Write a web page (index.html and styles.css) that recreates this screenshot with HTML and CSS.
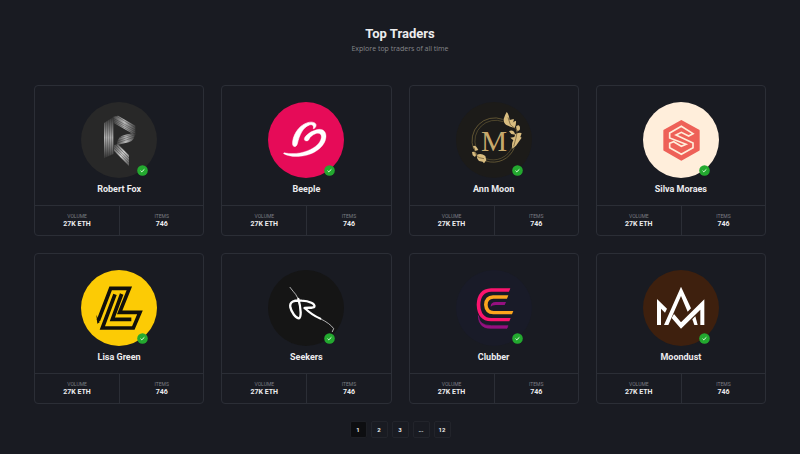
FILE: index.html
```
<!DOCTYPE html>
<html lang="en">
<head>
<meta charset="utf-8">
<meta name="viewport" content="width=device-width, initial-scale=1">
<title>Top Traders</title>
<link rel="stylesheet" href="styles.css">
</head>
<body>
<main class="page">
  <header class="heading">
    <h1>Top Traders</h1>
    <p>Explore top traders of all time</p>
  </header>

  <section class="grid" id="grid" aria-label="Traders">
    <article class="card">
      <div class="profile">
        <div class="avatar">
          <svg class="logo" viewBox="15 14 228 228" aria-hidden="true">
            <defs>
              <linearGradient id="r1" x1="0" y1="0" x2="0" y2="1"><stop offset="0" stop-color="#333"/><stop offset=".5" stop-color="#b5b5b5"/><stop offset="1" stop-color="#333"/></linearGradient>
              <linearGradient id="r2" x1="0" y1="0" x2="1" y2="0"><stop offset="0" stop-color="#444"/><stop offset=".5" stop-color="#bbb"/><stop offset="1" stop-color="#444"/></linearGradient>
              <linearGradient id="r3" x1="0" y1="0" x2="1" y2="1"><stop offset="0" stop-color="#444"/><stop offset=".5" stop-color="#ccc"/><stop offset="1" stop-color="#555"/></linearGradient>
            </defs>
            <circle cx="129" cy="128" r="114" fill="#282828"/>
            <path d="M84 77L112 59V170L84 183Z" fill="url(#r1)"/>
            <path d="M112 58L126 55L178 85V114L112 76Z" fill="url(#r2)"/>
            <path d="M123 137Q127 116 145 113L177 106Q177 130 158 135L123 143Z" fill="url(#r2)"/>
            <path d="M114 143L126 141L159 174V206L114 160Z" fill="url(#r3)"/>
            <g stroke="#292929" stroke-opacity=".6" stroke-width="2" fill="none"><path d="M89 72V184M95 68V182M101 64V180M107 60V178M112 63L178 98M112 68L178 104M112 73L178 110M119 55L178 91M125 131L177 112M124 137L176 119M132 121L176 108M118 141L159 182M115 146L159 190M115 153L159 198"/></g>
          </svg>
          <svg class="badge" viewBox="0 0 11 11" role="img" aria-label="Verified"><circle cx="5.500" cy="5.500" r="5.300" fill="#23a92f"/><path d="M3.600 5.700L4.800 6.800L7.400 4.300" fill="none" stroke="#e4ffe4" stroke-width="1"/></svg>
        </div>
        <h2>Robert Fox</h2>
      </div>
      <dl class="stats"><div><dt>VOLUME</dt><dd>27K ETH</dd></div><div><dt>ITEMS</dt><dd>746</dd></div></dl>
    </article>

    <article class="card">
      <div class="profile">
        <div class="avatar">
          <svg class="logo" viewBox="15 14 228 228" aria-hidden="true">
            <circle cx="129" cy="128" r="114" fill="#e60b58"/>
            <path d="M89 141C87 119 105 84 134 76C147 72 159 76 159 83C159 89 155 94 151 94C153 84 148 80 139 83C119 90 109 114 103 139C100 150 90 150 89 141Z" fill="#fff" stroke="#fff" stroke-width="2"/>
            <path d="M126 119C135 107 151 98 168 96C182 95 190 105 189 119C187 149 151 174 112 177C91 179 72 175 62 169C61 166 64 166 68 167C90 171 113 168 134 160C158 151 174 135 175 119C175 109 168 106 158 109C148 113 141 119 139 125C137 131 129 133 125 129C123 126 124 122 126 119Z" fill="#fff" stroke="#fff" stroke-width="1"/>
          </svg>
          <svg class="badge" viewBox="0 0 11 11" role="img" aria-label="Verified"><circle cx="5.500" cy="5.500" r="5.300" fill="#23a92f"/><path d="M3.600 5.700L4.800 6.800L7.400 4.300" fill="none" stroke="#e4ffe4" stroke-width="1"/></svg>
        </div>
        <h2>Beeple</h2>
      </div>
      <dl class="stats"><div><dt>VOLUME</dt><dd>27K ETH</dd></div><div><dt>ITEMS</dt><dd>746</dd></div></dl>
    </article>

    <article class="card">
      <div class="profile">
        <div class="avatar">
          <svg class="logo" viewBox="15 14 228 228" aria-hidden="true">
            <circle cx="129" cy="128" r="114" fill="#1c1b19"/>
            <g fill="none" stroke="#80703f" stroke-width="2"><path d="M155 66A68 68 0 0 0 68 155M105 191A68 68 0 0 0 190 151"/><path d="M156 73A62 62 0 0 0 75 151M105 184A62 62 0 0 0 184 148" stroke-width="1.500"/></g>
            <text class="monogram" x="129" y="162" text-anchor="middle" font-size="88" fill="#c6a96d">M</text>
            <g fill="#d9bd80">
              <path d="M167 44Q161 54 158 65Q157 78 166 83L178 88L191 92Q196 82 195 70L188 73L185 76Q190 69 188 65L176 68Q174 51 167 44Z"/>
              <path d="M196 92Q193 84 203 84Q209 88 206 98L197 103ZM174 102Q181 97 189 103L193 112L181 110ZM193 110Q208 104 212 108L208 119L212 121L203 134L195 145L184 154Q181 139 187 129L178 121L190 119Z"/>
              <path d="M66 147Q72 142 78 151L82 158L72 161ZM63 164Q73 161 77 170L72 179L65 174ZM77 173Q90 166 103 176L106 189L99 198L95 193L84 191L79 184Z"/>
            </g>
            <path d="M171 60L178 82L199 99L195 122L188 147M70 151L73 170L84 181L99 184" fill="none" stroke="#5e4d2c" stroke-width="2"/>
          </svg>
          <svg class="badge" viewBox="0 0 11 11" role="img" aria-label="Verified"><circle cx="5.500" cy="5.500" r="5.300" fill="#23a92f"/><path d="M3.600 5.700L4.800 6.800L7.400 4.300" fill="none" stroke="#e4ffe4" stroke-width="1"/></svg>
        </div>
        <h2>Ann Moon</h2>
      </div>
      <dl class="stats"><div><dt>VOLUME</dt><dd>27K ETH</dd></div><div><dt>ITEMS</dt><dd>746</dd></div></dl>
    </article>

    <article class="card">
      <div class="profile">
        <div class="avatar">
          <svg class="logo" viewBox="15 14 228 228" aria-hidden="true">
            <circle cx="129" cy="128" r="114" fill="#ffeedb"/>
            <path d="M130 71L182 100V158L130 187L79 158V100Z" fill="#ee6158" stroke="#ee6158" stroke-width="6" stroke-linejoin="round"/>
            <path d="M165 109L152 116L130 105L114 113L165 137V151L130 171L95 151V138L107 133L130 147L144 141L95 122V107L130 87Z" fill="#ee6158" stroke="#ffeedb" stroke-width="5"/>
          </svg>
          <svg class="badge" viewBox="0 0 11 11" role="img" aria-label="Verified"><circle cx="5.500" cy="5.500" r="5.300" fill="#23a92f"/><path d="M3.600 5.700L4.800 6.800L7.400 4.300" fill="none" stroke="#e4ffe4" stroke-width="1"/></svg>
        </div>
        <h2>Silva Moraes</h2>
      </div>
      <dl class="stats"><div><dt>VOLUME</dt><dd>27K ETH</dd></div><div><dt>ITEMS</dt><dd>746</dd></div></dl>
    </article>

    <article class="card">
      <div class="profile">
        <div class="avatar">
          <svg class="logo" viewBox="15 14 228 228" aria-hidden="true">
            <circle cx="129" cy="128" r="114" fill="#fccb05"/>
            <path d="M67 166L104 69H160L131 141H192L172 188H79L117 87" fill="none" stroke="#11100b" stroke-width="11"/>
            <path d="M137 86L109 162H166" fill="none" stroke="#11100b" stroke-width="11"/>
            <path d="M61 148L71 171L64 175Z" fill="#11100b"/>
          </svg>
          <svg class="badge" viewBox="0 0 11 11" role="img" aria-label="Verified"><circle cx="5.500" cy="5.500" r="5.300" fill="#23a92f"/><path d="M3.600 5.700L4.800 6.800L7.400 4.300" fill="none" stroke="#e4ffe4" stroke-width="1"/></svg>
        </div>
        <h2>Lisa Green</h2>
      </div>
      <dl class="stats"><div><dt>VOLUME</dt><dd>27K ETH</dd></div><div><dt>ITEMS</dt><dd>746</dd></div></dl>
    </article>

    <article class="card">
      <div class="profile">
        <div class="avatar">
          <svg class="logo" viewBox="15 14 228 228" aria-hidden="true">
            <circle cx="129" cy="128" r="114" fill="#151515"/>
            <g fill="none" stroke="#fff" stroke-linecap="round" stroke-linejoin="round">
              <path d="M81 66Q91 79 98 87L107 103" stroke-width="2"/>
              <path d="M106 101Q112 120 113 141Q113 158 108 159C99 159 85 141 82 126C79 108 94 104 116 106C139 107 158 116 154 124C150 129 137 126 125 128" stroke-width="7"/>
              <path d="M125 128C137 140 154 152 172 160" stroke-width="6"/>
              <path d="M172 160Q202 175 212 190L208 199" stroke-width="2"/>
            </g>
          </svg>
          <svg class="badge" viewBox="0 0 11 11" role="img" aria-label="Verified"><circle cx="5.500" cy="5.500" r="5.300" fill="#23a92f"/><path d="M3.600 5.700L4.800 6.800L7.400 4.300" fill="none" stroke="#e4ffe4" stroke-width="1"/></svg>
        </div>
        <h2>Seekers</h2>
      </div>
      <dl class="stats"><div><dt>VOLUME</dt><dd>27K ETH</dd></div><div><dt>ITEMS</dt><dd>746</dd></div></dl>
    </article>

    <article class="card">
      <div class="profile">
        <div class="avatar">
          <svg class="logo" viewBox="15 14 228 228" aria-hidden="true">
            <circle cx="129" cy="128" r="114" fill="#191b28"/>
            <path d="M82 151Q84 181 121 181H171L168 189H120Q83 190 82 151Z" fill="#951080" stroke="#951080" stroke-width="2"/>
            <path d="M119 124Q119 110 134 110H165L161 119H134Q123 119 119 124Z" fill="#951080"/>
            <path d="M178 69L174 79H121Q89 80 88 118Q89 157 121 158H179L175 168H120Q79 166 77 118Q79 71 120 69Z" fill="#fb146e"/>
            <path d="M172 90L168 100H127Q110 101 110 118Q110 136 128 137H187L183 147H127Q101 146 99 118Q101 91 126 90Z" fill="#fca51d"/>
          </svg>
          <svg class="badge" viewBox="0 0 11 11" role="img" aria-label="Verified"><circle cx="5.500" cy="5.500" r="5.300" fill="#23a92f"/><path d="M3.600 5.700L4.800 6.800L7.400 4.300" fill="none" stroke="#e4ffe4" stroke-width="1"/></svg>
        </div>
        <h2>Clubber</h2>
      </div>
      <dl class="stats"><div><dt>VOLUME</dt><dd>27K ETH</dd></div><div><dt>ITEMS</dt><dd>746</dd></div></dl>
    </article>

    <article class="card">
      <div class="profile">
        <div class="avatar">
          <svg class="logo" viewBox="15 14 228 228" aria-hidden="true">
            <circle cx="129" cy="128" r="114" fill="#3e200e"/>
            <g fill="#fff">
              <path d="M57 179V101L87 130L81 142L69 130V179Z"/>
              <path d="M78 179L129 64L159 129L149 139L129 92L91 179Z"/>
              <path d="M101 158L108 146L129 171L199 102V179H187V133L129 190Z"/>
              <path d="M163 162L172 153L179 179H169Z"/>
            </g>
          </svg>
          <svg class="badge" viewBox="0 0 11 11" role="img" aria-label="Verified"><circle cx="5.500" cy="5.500" r="5.300" fill="#23a92f"/><path d="M3.600 5.700L4.800 6.800L7.400 4.300" fill="none" stroke="#e4ffe4" stroke-width="1"/></svg>
        </div>
        <h2>Moondust</h2>
      </div>
      <dl class="stats"><div><dt>VOLUME</dt><dd>27K ETH</dd></div><div><dt>ITEMS</dt><dd>746</dd></div></dl>
    </article>
  </section>

  <nav class="pagination" aria-label="Pagination">
    <button type="button" class="current" aria-current="page">1</button>
    <button type="button">2</button>
    <button type="button">3</button>
    <button type="button">...</button>
    <button type="button">12</button>
  </nav>
</main>
</body>
</html>
```
FILE: styles.css
```
* {
  box-sizing: border-box;
}

body {
  margin: 0;
  background: #191b22;
  color: #ececee;
  font-family: Roboto, "Liberation Sans", sans-serif;
}

h1, h2, p, dl, dd {
  margin: 0;
}

.page {
  padding: 25px 34px 16px;
}

.heading {
  margin-bottom: 30px;
  text-align: center;
}

.heading h1 {
  font-size: 13px;
  line-height: 18px;
  font-weight: 700;
}

.heading p {
  color: #85868a;
  font: 7px/12px "Open Sans", sans-serif;
}

.grid {
  display: grid;
  grid-template-columns: repeat(4, 1fr);
  gap: 17px;
}

.card {
  border: 1px solid #2b2e36;
  border-radius: 4px;
}

.profile {
  display: flex;
  flex-direction: column;
  align-items: center;
  padding: 16px 8px 9px;
}

.avatar {
  position: relative;
  width: 76px;
  height: 76px;
}

.logo {
  display: block;
  width: 100%;
  height: 100%;
}

.monogram {
  font-family: "Liberation Serif", serif;
}

.badge {
  position: absolute;
  right: 9px;
  bottom: 2px;
  width: 11px;
  height: 11px;
}

.profile h2 {
  margin-top: 5px;
  font-size: 9px;
  line-height: 13px;
  font-weight: 700;
}

.stats {
  display: grid;
  grid-template-columns: 1fr 1fr;
  border-top: 1px solid #2b2e36;
  text-align: center;
}

.stats div {
  padding: 6px 0;
}

.stats div + div {
  border-left: 1px solid #2b2e36;
}

.stats dt {
  color: #7b7d82;
  font-size: 5px;
  line-height: 8px;
}

.stats dd {
  font-size: 7px;
  line-height: 9px;
  font-weight: 700;
}

.pagination {
  display: flex;
  justify-content: center;
  gap: 4px;
  margin-top: 17px;
}

.pagination button {
  width: 17px;
  height: 17px;
  padding: 0;
  border: 1px solid #22242b;
  border-radius: 2px;
  background: transparent;
  color: #ededee;
  font: 700 6px/15px Roboto, sans-serif;
  text-align: center;
}

.pagination .current {
  border-color: #1d1f25;
  background: #0d0e11;
}
```
